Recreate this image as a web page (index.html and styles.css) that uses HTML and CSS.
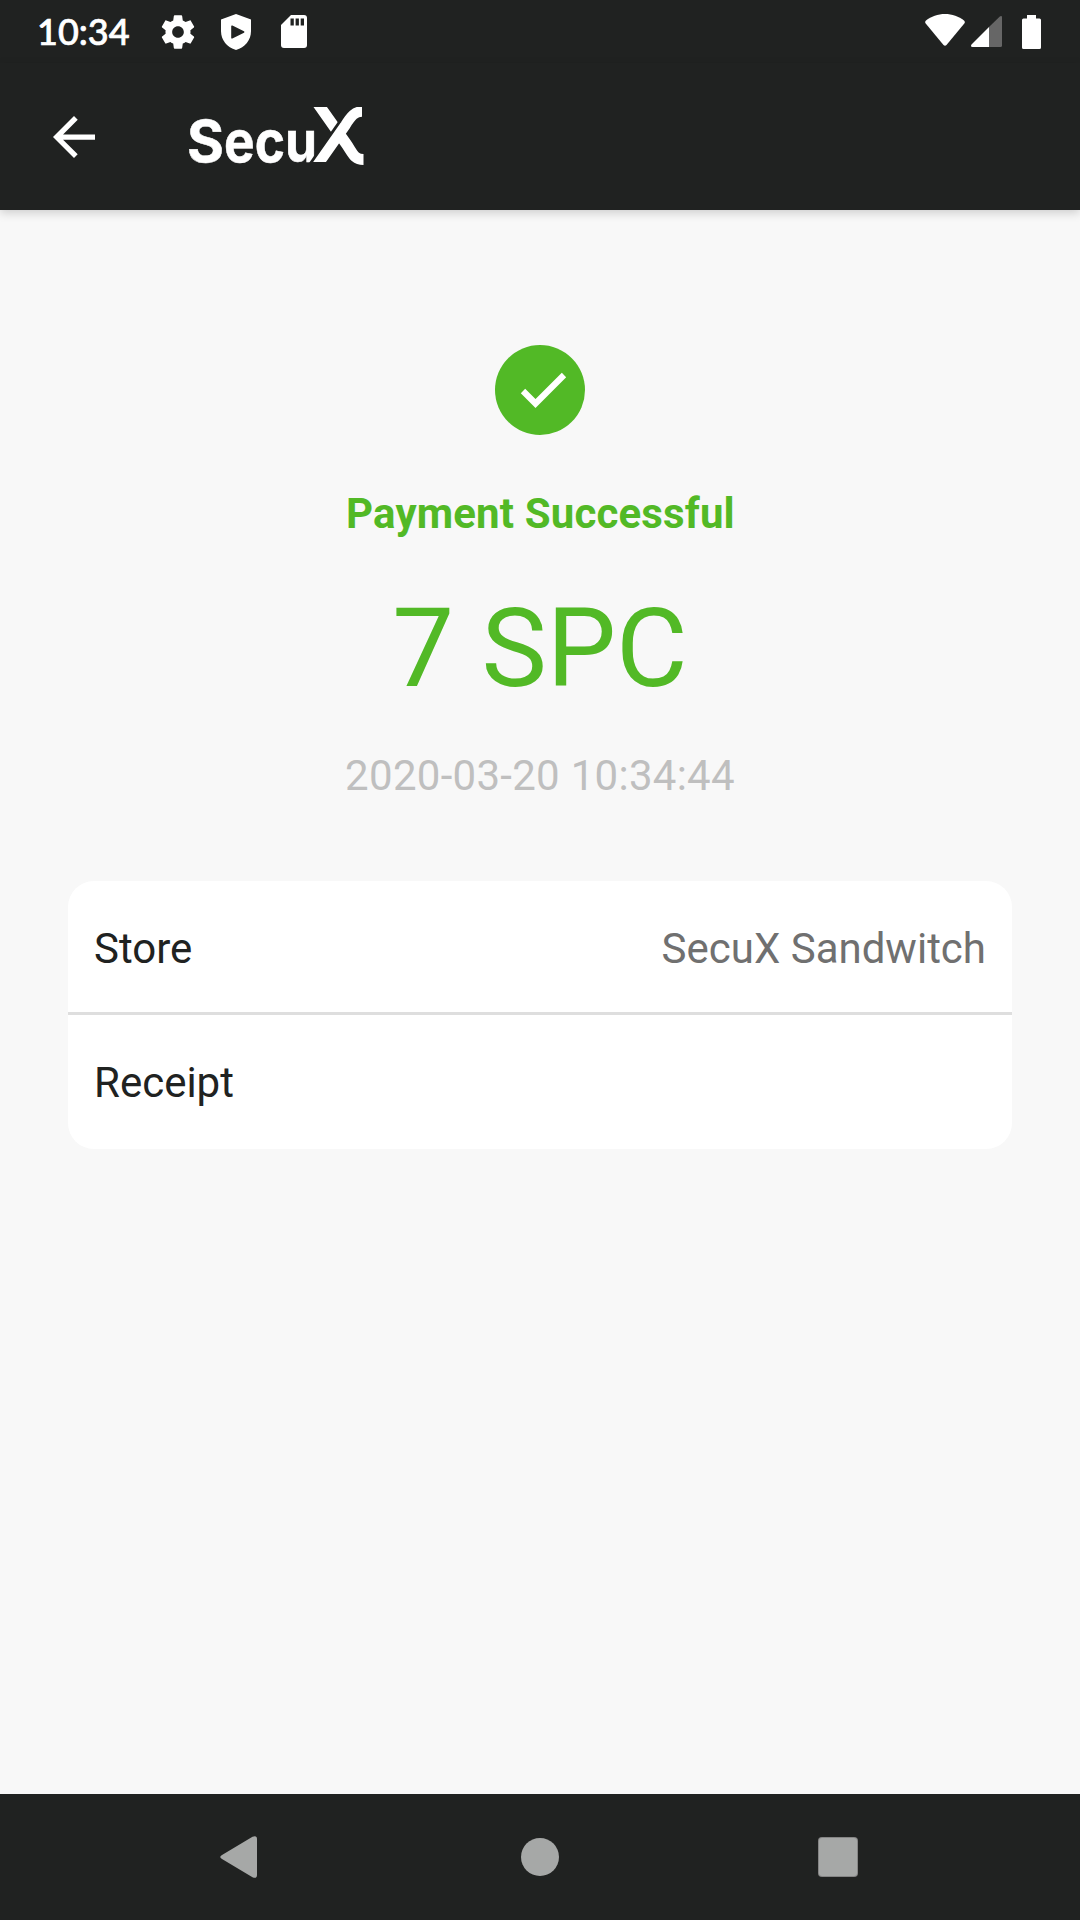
FILE: index.html
```html
<!DOCTYPE html>
<html lang="en">
<head>
<meta charset="utf-8">
<title>Payment</title>
<link rel="stylesheet" href="styles.css">
</head>
<body>
<div class="screen">
  <div class="status-bar">
    <span class="clock">10:34</span>
    <div class="status-left">
      <svg width="40" height="40" viewBox="0 0 24 24" fill="#fff"><path d="M19.43 12.98c.04-.32.07-.64.07-.98s-.03-.66-.07-.98l2.11-1.65c.19-.15.24-.42.12-.64l-2-3.46c-.12-.22-.39-.3-.61-.22l-2.49 1c-.52-.4-1.08-.73-1.69-.98l-.38-2.65C14.46 2.18 14.25 2 14 2h-4c-.25 0-.46.18-.49.42l-.38 2.65c-.61.25-1.17.59-1.69.98l-2.49-1c-.23-.09-.49 0-.61.22l-2 3.46c-.13.22-.07.49.12.64l2.11 1.65c-.04.32-.07.65-.07.98s.03.66.07.98l-2.11 1.65c-.19.15-.24.42-.12.64l2 3.46c.12.22.39.3.61.22l2.49-1c.52.4 1.08.73 1.69.98l.38 2.65c.03.24.24.42.49.42h4c.25 0 .46-.18.49-.42l.38-2.65c.61-.25 1.17-.59 1.69-.98l2.49 1c.23.09.49 0 .61-.22l2-3.46c.12-.22.07-.49-.12-.64l-2.11-1.65zM12 15.500c-1.930 0-3.500-1.570-3.500-3.500s1.570-3.500 3.500-3.500 3.500 1.570 3.500 3.500-1.570 3.500-3.500 3.500z"/></svg>
      <svg width="30" height="36" viewBox="0 0 30 36"><path fill="#fff" d="M15 0 30 5.500V17C30 26 24 33.500 15 36 6 33.500 0 26 0 17V5.500Z"/><path fill="#202221" d="M10.200 12.300Q10.200 11 11.400 11.600L23 17.200Q24 18 23 18.800L11.400 24.400Q10.200 25 10.200 23.700Z"/></svg>
      <svg width="26" height="33" viewBox="0 0 26 33"><path fill="#fff" d="M10 0H23Q26 0 26 3V30Q26 33 23 33H3Q0 33 0 30V10Z"/><path fill="#202221" d="M9.500 3.500h3.300v7H9.500zM14.600 3.500h3.300v7h-3.300zM19.700 3.500H23v7h-3.300z"/></svg>
    </div>
    <div class="status-right">
      <svg width="40" height="32" viewBox="0 0 40 32"><path fill="#fff" d="M1 6.500C6 2.500 13 0 20 0S34 2.500 39 6.500Q40.500 8 39.300 9.500L21.500 31Q20 32.500 18.500 31L.7 9.500Q-.5 8 1 6.500Z"/></svg>
      <svg width="31" height="31" viewBox="0 0 31 31"><path fill="#666" d="M18 11 28.800.5Q31-.8 31 1.500V29.500Q31 31 29.500 31H18Z"/><path fill="#fff" d="M18 11V31H1.500Q-.8 31 .5 28.500Z"/></svg>
      <svg width="19" height="34" viewBox="0 0 19 34"><path fill="#fff" d="M5 0H14V3.500H17.500Q19 3.500 19 5V32.500Q19 34 17.500 34H1.500Q0 34 0 32.500V5Q0 3.500 1.500 3.500H5Z"/></svg>
    </div>
  </div>
  <header class="app-bar">
    <svg class="back" width="42" height="42" viewBox="4 4 16 16" fill="#fff"><path d="M20 11H7.830l5.590-5.590L12 4l-8 8 8 8 1.410-1.410L7.830 13H20v-2z"/></svg>
    <svg class="logo" width="182" height="80" viewBox="-4 -10 182 80" role="img" aria-label="SecuX">
      <defs>
        <clipPath id="fall"><path d="M120 0H180V58H120Z"/></clipPath>
        <clipPath id="rise"><path d="M120 0H180V55H120Z"/></clipPath>
      </defs>
      <text class="logo-text" y="55"><tspan x="-2" textLength="37" lengthAdjust="spacingAndGlyphs">S</tspan><tspan x="35" textLength="93" lengthAdjust="spacingAndGlyphs">ecu</tspan></text>
      <g fill="none" stroke="#fff" stroke-width="11">
        <path clip-path="url(#fall)" d="M127 -6 157 36.500C164 46.500 165 52.500 174.500 52.500"/>
        <path stroke="#202221" d="M123.700 60.500 154.500 16.500"/>
        <path clip-path="url(#rise)" d="M126 61.500 156.500 18C162 9 166 4.500 173 4.500" stroke-width="10.500"/>
      </g>
    </svg>
  </header>
  <main class="content">
    <svg class="check" width="90" height="90" viewBox="0 0 90 90"><circle cx="45" cy="45" r="45" fill="#52b926"/><path d="M28 46 40.500 58.500 69 30" fill="none" stroke="#fff" stroke-width="6.200"/></svg>
    <h1 class="title">Payment Successful</h1>
    <div class="amount">7 SPC</div>
    <div class="date">2020-03-20 10:34:44</div>
    <section class="card">
      <div class="row"><span>Store</span><span class="value">SecuX Sandwitch</span></div>
      <div class="row"><span>Receipt</span></div>
    </section>
  </main>
  <nav class="nav-bar">
    <svg width="37" height="42" viewBox="0 0 37 42"><path d="M2 19 32.500.7Q37-1 37 3V39Q37 43 32.500 41.300L2 23Q-1.500 21 2 19Z"/></svg>
    <svg class="home" width="38" height="38" viewBox="0 0 38 38"><circle cx="19" cy="19" r="19"/></svg>
    <svg width="40" height="40" viewBox="0 0 40 40"><rect width="40" height="40" rx="4" fill="#858585"/><rect x="1" y="1" width="38" height="38" rx="3"/></svg>
  </nav>
</div>
</body>
</html>
```
FILE: styles.css
```css
* { box-sizing: border-box; }
body { margin: 0; font-family: Roboto, sans-serif; }
svg { display: block; flex: none; }
.screen {
  width: 1080px;
  height: 1920px;
  display: flex;
  flex-direction: column;
  background: #f8f8f8;
  overflow: hidden;
}
.status-bar {
  height: 63px;
  display: flex;
  align-items: center;
  padding: 0 39px 0 37px;
  background: #202221;
}
.clock {
  width: 121px;
  padding-bottom: 2px;
  color: #fff;
  font: 500 36px/60px Lato, sans-serif;
  -webkit-text-stroke: .7px #fff;
}
.status-left { display: flex; align-items: center; gap: 30px; }
.status-left svg:first-child { margin-right: -7px; }
.status-right { display: flex; align-items: center; margin-left: auto; }
.status-right svg:nth-child(1) { margin: 0 6px 3px 0; }
.status-right svg:nth-child(3) { margin-left: 20px; }
.app-bar {
  height: 147px;
  display: flex;
  align-items: flex-start;
  padding: 34px 53px 0;
  background: #202221;
  box-shadow: 0 3px 9px rgba(0, 0, 0, .17);
}
.back { margin-top: 19px; }
.logo { margin-left: 90px; }
.logo-text {
  font: 700 57.500px Inter, sans-serif;
  fill: #fff;
  stroke: #fff;
  stroke-width: .5px;
}
.content {
  flex: 1;
  display: flex;
  flex-direction: column;
  align-items: center;
  padding: 135px 68px 0;
  font-size: 42px;
  line-height: 49px;
}
.title {
  margin: 54px 0 0 1px;
  font-size: 42px;
  font-weight: 700;
  line-height: 49px;
  letter-spacing: .15px;
  color: #52b926;
}
.amount {
  margin-top: 46px;
  font-size: 110px;
  line-height: 129px;
  color: #52b926;
}
.date { margin-top: 38px; letter-spacing: .28px; color: #bfbfbf; }
.card {
  align-self: stretch;
  margin-top: 81px;
  border-radius: 26px;
  background: #fff;
  color: #202221;
}
.row {
  display: flex;
  justify-content: space-between;
  height: 134px;
  padding: 43px 26px 0;
}
.row:first-child { border-bottom: 3px solid #dedede; }
.value { color: #707070; }
.nav-bar {
  height: 126px;
  display: flex;
  align-items: center;
  justify-content: space-between;
  padding: 0 222px 0 220px;
  background: #202221;
  fill: #a6a8a7;
}
.home { margin-left: 4px; }
```
